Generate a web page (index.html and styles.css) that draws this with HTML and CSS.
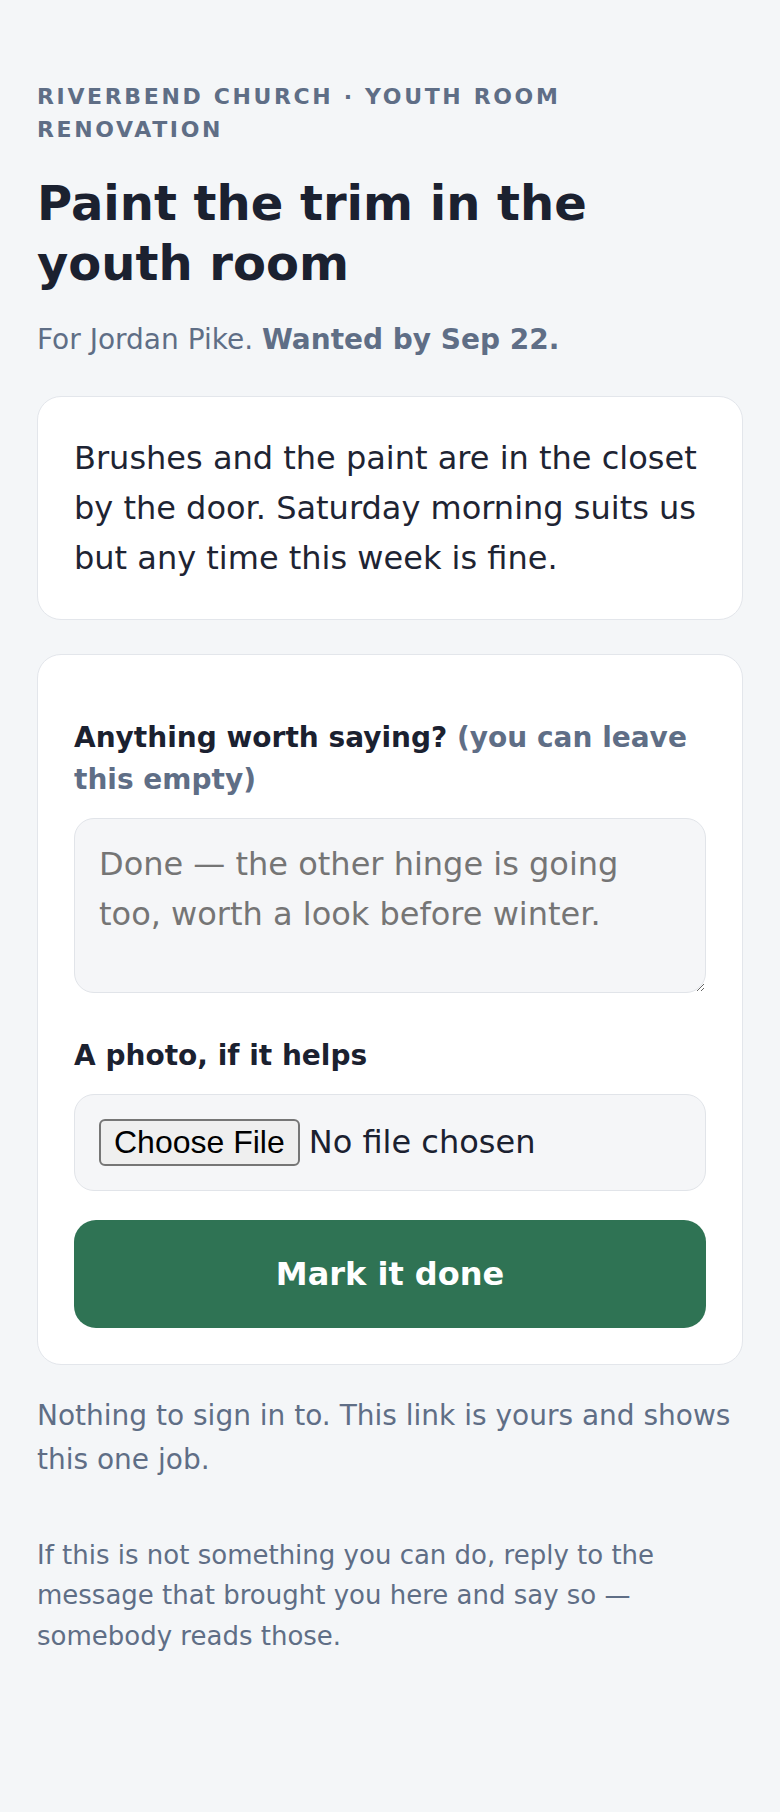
FILE: index.html
```html
<!DOCTYPE html>
<html lang="en">
<head>
<meta charset="utf-8">
<title>Paint the trim in the youth room</title>
<link rel="stylesheet" href="styles.css">
</head>
<body>
<main class="page">
  <p class="eyebrow">Riverbend Church · Youth Room Renovation</p>
  <h1 class="title">Paint the trim in the youth room</h1>
  <p class="sub">For Jordan Pike. <strong>Wanted by Sep 22.</strong></p>

  <section class="card note">
    <p>Brushes and the paint are in the closet by the door. Saturday morning suits us but any time this week is fine.</p>
  </section>

  <form class="card form">
    <div class="field field-note">
      <label class="label" for="note">Anything worth saying? <span class="hint">(you can leave this empty)</span></label>
      <textarea id="note" class="textarea" placeholder="Done — the other hinge is going too, worth a look before winter."></textarea>
    </div>
    <div class="field field-photo">
      <label class="label" for="photo">A photo, if it helps</label>
      <div class="filebox">
        <input id="photo" class="file" type="file" accept="image/*">
      </div>
    </div>
    <button type="button" class="submit">Mark it done</button>
  </form>

  <p class="foot">Nothing to sign in to. This link is yours and shows this one job.</p>
  <p class="foot foot-small">If this is not something you can do, reply to the message that brought you here and say so — somebody reads those.</p>
</main>
</body>
</html>
```

FILE: styles.css
```css
html {
  background: #f4f6f8;
}

body {
  margin: 0;
  font-family: "DejaVu Sans", sans-serif;
  color: #1e2433;
  background: #f4f6f8;
}

.page {
  padding: 80px 37px 120px;
}

.eyebrow {
  margin: 0 0 27px;
  font-size: 22px;
  line-height: 33px;
  font-weight: 700;
  letter-spacing: 0.12em;
  text-transform: uppercase;
  color: #5f6e86;
}

.title {
  margin: 0 0 25px;
  font-size: 48px;
  line-height: 60px;
  font-weight: 700;
  color: #1b2130;
}

.sub {
  margin: 0 0 35px;
  font-size: 28px;
  line-height: 1.55;
  color: #5f6e86;
}

.sub strong {
  font-weight: 700;
}

.card {
  background: #ffffff;
  border: 1px solid #e3e6eb;
  border-radius: 24px;
  padding: 36px;
}

.note p {
  margin: 0;
  font-size: 32px;
  line-height: 50px;
  color: #1e2433;
}

.form {
  margin-top: 34px;
  padding-top: 62px;
}

.label {
  display: block;
  margin-bottom: 17px;
  font-size: 28px;
  line-height: 42px;
  font-weight: 700;
  color: #1b2130;
}

.hint {
  color: #5f6e86;
}

.field-note {
  margin-bottom: 42px;
}

.field-photo {
  margin-bottom: 29px;
}

.textarea {
  display: block;
  box-sizing: border-box;
  width: 100%;
  height: 175px;
  margin: 0;
  padding: 20px 24px;
  font-family: "DejaVu Sans", sans-serif;
  font-size: 32px;
  line-height: 50px;
  color: #1e2433;
  background: #f5f6f8;
  border: 1px solid #e1e4e9;
  border-radius: 20px;
  resize: vertical;
}

.textarea::placeholder {
  color: #757575;
}

.filebox {
  padding: 24px;
  background: #f5f6f8;
  border: 1px solid #e1e4e9;
  border-radius: 20px;
}

.file {
  display: block;
  font-family: "DejaVu Sans", sans-serif;
  font-size: 32px;
  line-height: normal;
  color: #1b2130;
}

.file::file-selector-button {
  font-family: "Liberation Sans", Arial, sans-serif;
  font-size: 32px;
  padding: 3px 13px;
  margin-right: 9px;
  color: #000;
  background: #efefef;
  border: 2px solid #767676;
  border-radius: 6px;
}

.submit {
  display: block;
  width: 100%;
  margin: 0;
  padding: 30px;
  font-family: "DejaVu Sans", sans-serif;
  font-size: 32px;
  line-height: 48px;
  font-weight: 700;
  color: #ffffff;
  background: #2f7354;
  border: 0;
  border-radius: 22px;
}

.foot {
  margin: 29px 0 0;
  font-size: 28px;
  line-height: 1.55;
  color: #5f6e86;
}

.foot-small {
  margin-top: 54px;
  font-size: 26px;
}
```
